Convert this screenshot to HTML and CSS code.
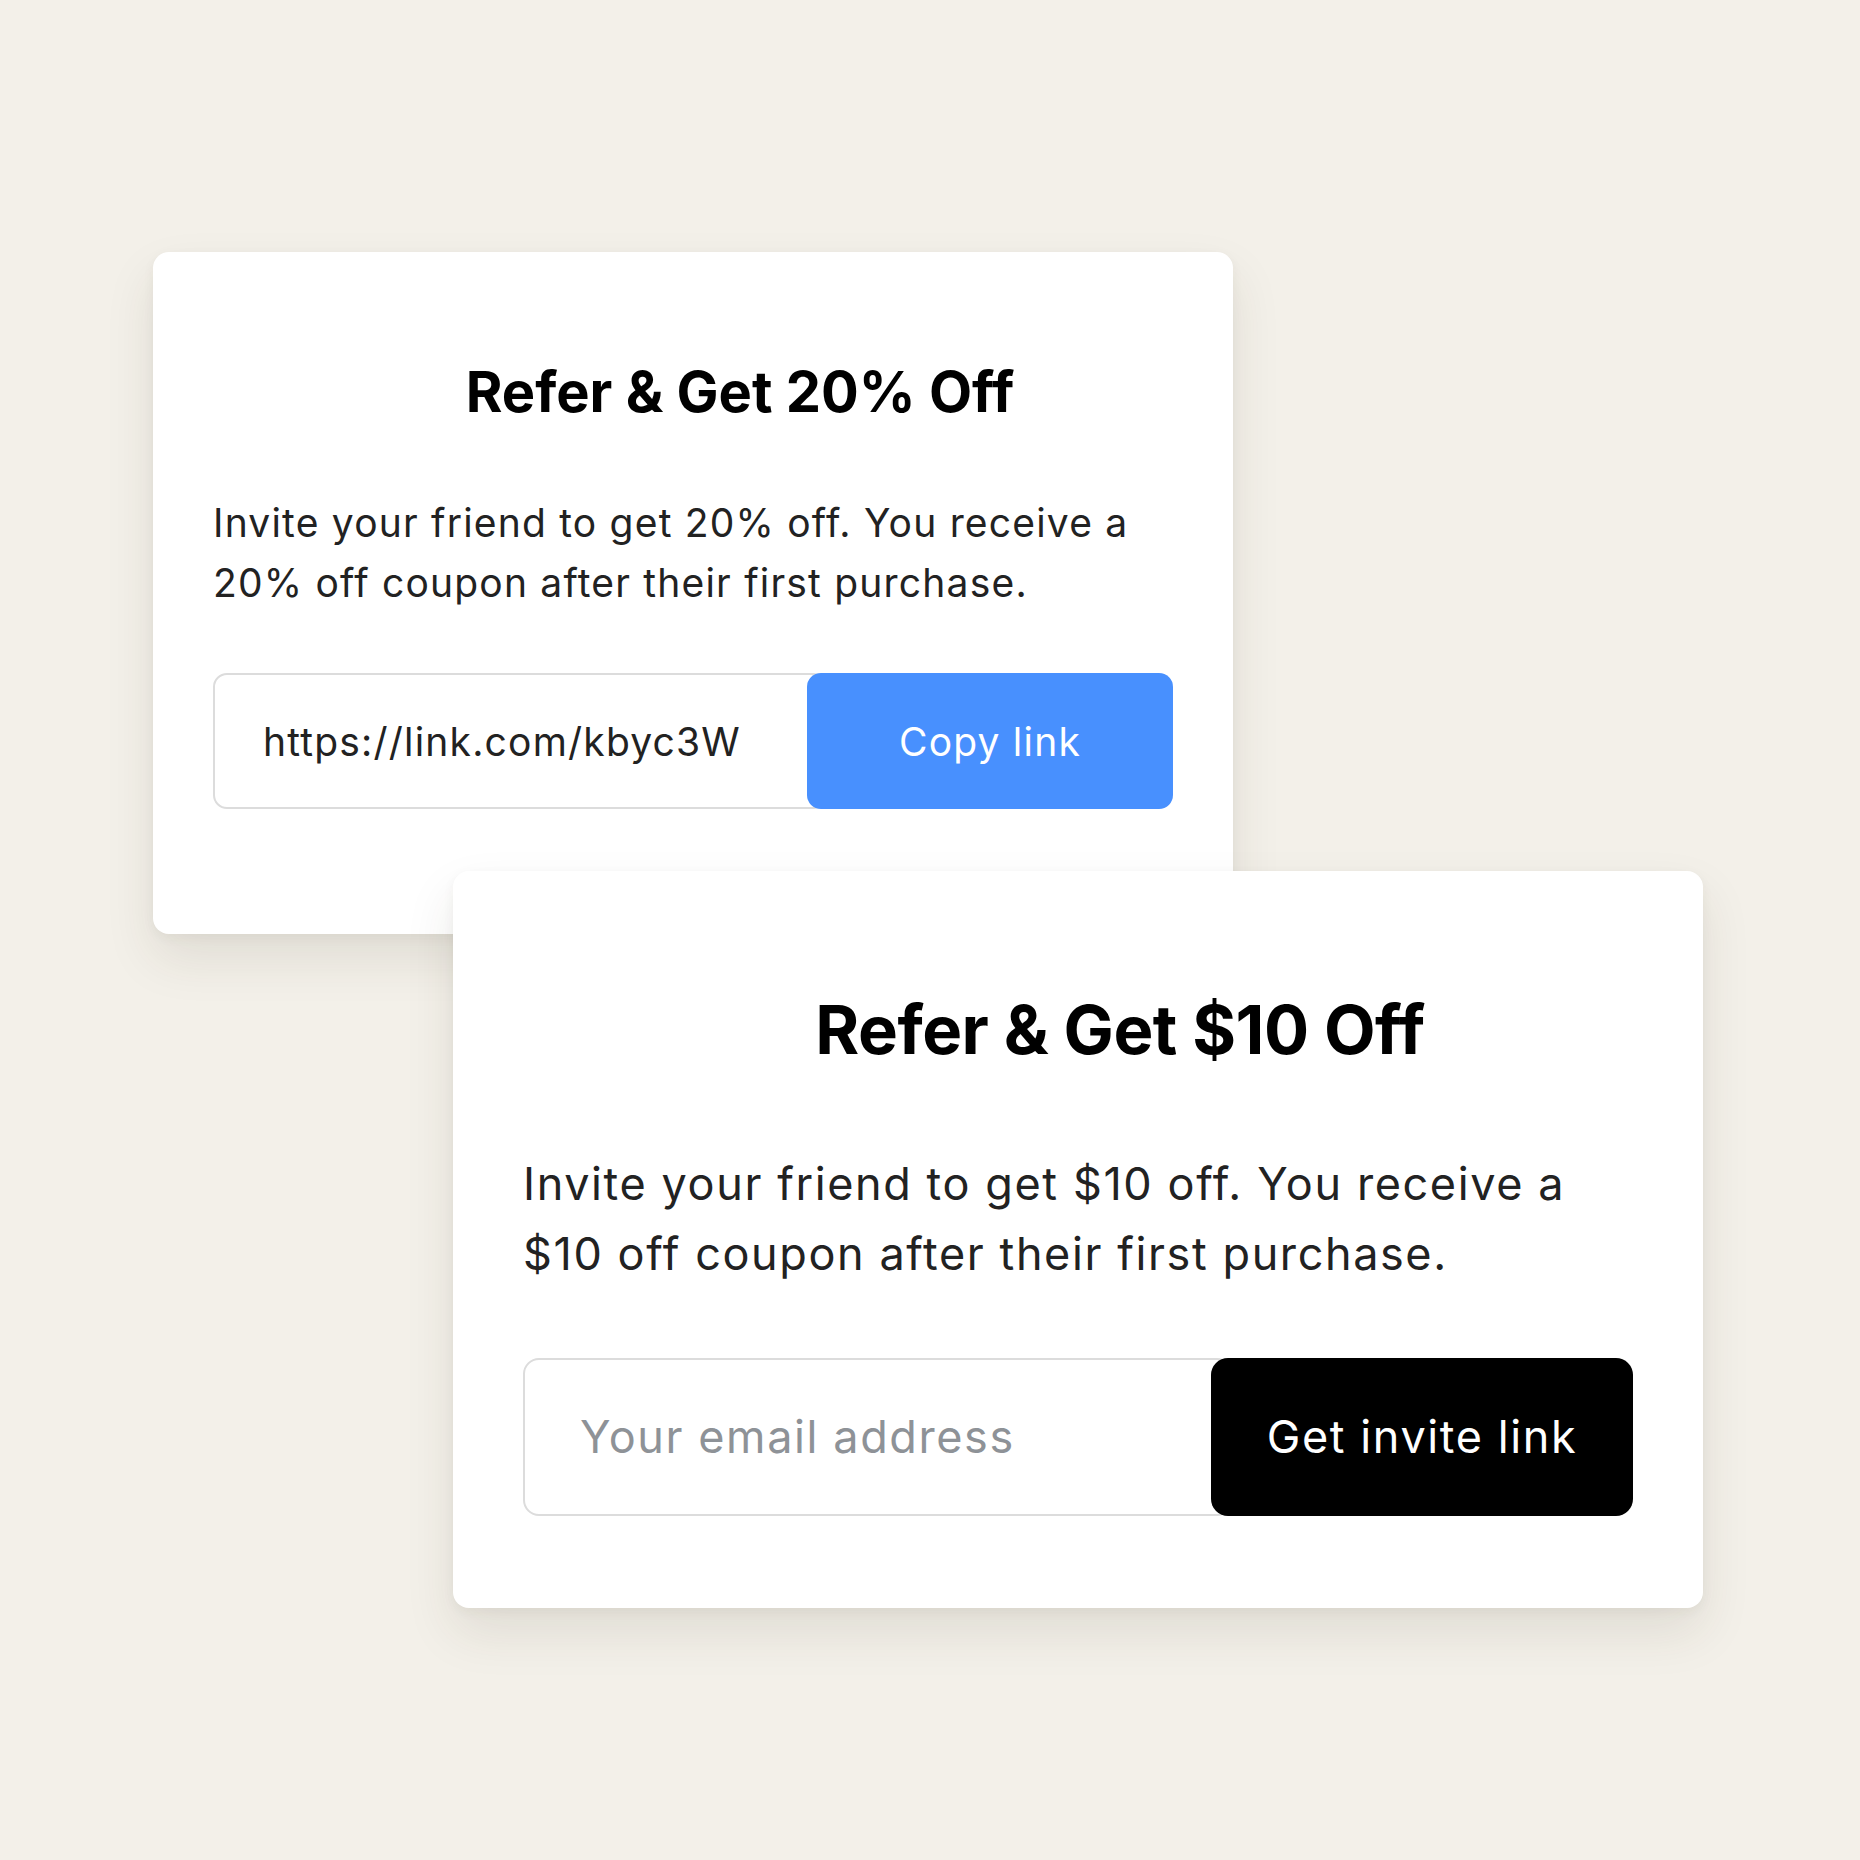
FILE: index.html
```html
<!DOCTYPE html>
<html lang="en">
<head>
    <meta charset="UTF-8">
    <meta name="viewport" content="width=device-width, initial-scale=1.0">
    <title>Referral cards</title>
    <link rel="stylesheet" href="styles.css">
</head>
<body>
    <div class="canvas">
        <div class="card card-small">
            <h2 class="card-title">Refer &amp; Get 20% Off</h2>
            <p class="card-text">Invite your friend to get 20% off. You receive a 20% off coupon after their first purchase.</p>
            <div class="field">
                <input class="field-input" type="text" value="https://link.com/kbyc3W" readonly>
                <button class="field-btn btn-blue">Copy link</button>
            </div>
        </div>

        <div class="card card-big">
            <h2 class="card-title">Refer &amp; Get $10 Off</h2>
            <p class="card-text">Invite your friend to get $10 off. You receive a $10 off coupon after their first purchase.</p>
            <div class="field">
                <input class="field-input" type="email" placeholder="Your email address">
                <button class="field-btn btn-black">Get invite link</button>
            </div>
        </div>
    </div>
</body>
</html>
```

FILE: styles.css
```css
body {
    margin: 0;
    background: #f3f0e9;
    font-family: Inter, "Noto Sans", sans-serif;
}
.canvas {
    width: 1860px;
    height: 1860px;
    padding-top: 252px;
    box-sizing: border-box;
}
.card {
    background: #fff;
    border-radius: 16px;
    box-sizing: border-box;
    box-shadow: 0 24px 50px rgba(60, 50, 30, 0.10), 0 4px 12px rgba(60, 50, 30, 0.05);
}
.card-title {
    margin: 0;
    color: #000;
    font-weight: 700;
    text-align: center;
    line-height: 1.2;
}
.card-text {
    margin: 0;
    color: #222;
}
.field {
    display: flex;
}
.field-input {
    flex: 1;
    min-width: 0;
    border: 2px solid #dcdcdc;
    background: #fff;
    color: #222;
    font-family: inherit;
    outline: none;
}
.field-input::placeholder {
    color: #8e9297;
}
.field-btn {
    border: none;
    color: #fff;
    font-family: inherit;
    cursor: pointer;
}
.btn-blue {
    background: #4890fe;
}
.btn-black {
    background: #000;
}

/* first card */
.card-small {
    width: 1080px;
    margin-left: 153px;
    padding: 107px 60px 125px;
}
.card-small .card-title {
    font-size: 56px;
    letter-spacing: 0;
    padding-left: 94px;
}
.card-small .card-text {
    margin-top: 67px;
    font-size: 39px;
    letter-spacing: 1.2px;
    line-height: 60px;
}
.card-small .field {
    margin-top: 60px;
    height: 136px;
}
.card-small .field-input {
    border-radius: 14px;
    padding: 0 48px;
    font-size: 39px;
    letter-spacing: 1.2px;
}
.card-small .field-btn {
    width: 366px;
    margin-left: -20px;
    border-radius: 14px;
    font-size: 39px;
    letter-spacing: 1.2px;
}

/* second card, lies over the first */
.card-big {
    position: relative;
    width: 1250px;
    margin-left: 453px;
    margin-top: -63px;
    padding: 119px 70px 92px;
}
.card-big .card-title {
    font-size: 67px;
    letter-spacing: -0.5px;
    padding-left: 84px;
}
.card-big .card-text {
    margin-top: 78px;
    font-size: 45px;
    letter-spacing: 1.6px;
    line-height: 70px;
}
.card-big .field {
    margin-top: 69px;
    height: 158px;
}
.card-big .field-input {
    border-radius: 16px;
    padding: 0 55px;
    font-size: 45px;
    letter-spacing: 1.6px;
}
.card-big .field-btn {
    width: 422px;
    margin-left: -22px;
    border-radius: 17px;
    font-size: 45px;
    letter-spacing: 1.6px;
}
```
